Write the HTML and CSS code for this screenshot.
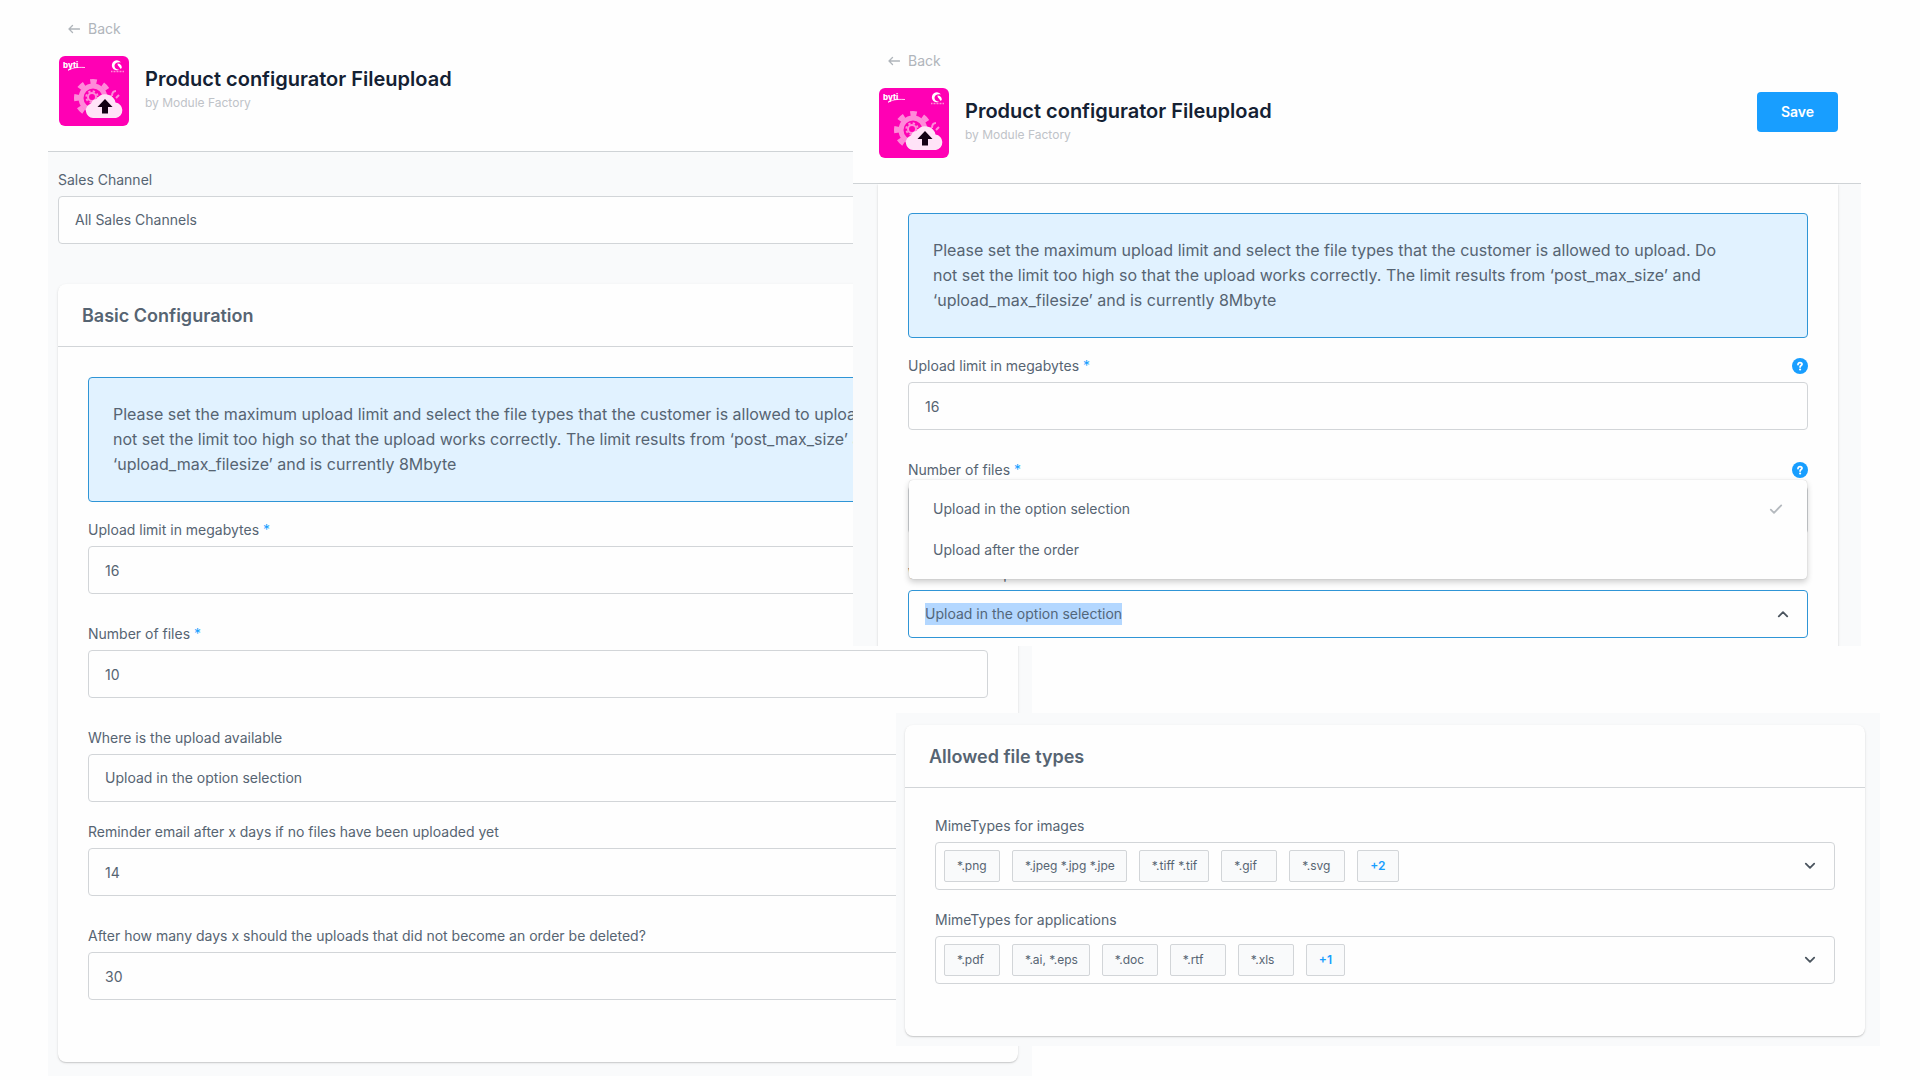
FILE: index.html
```html
<!DOCTYPE html>
<html lang="en">
<head>
<meta charset="utf-8">
<title>Product configurator Fileupload</title>
<link rel="stylesheet" href="styles.css">
</head>
<body>
<svg class="sprite" aria-hidden="true">
  <symbol id="arrow-left" viewBox="0 0 12 12"><path d="M11.500 6H1M4.500 2.500L1 6l3.500 3.500" fill="none" stroke="currentColor" stroke-width="1.300" stroke-linecap="round" stroke-linejoin="round"/></symbol>
  <symbol id="chevron-down" viewBox="0 0 10 10"><path d="M1.500 3L5 6.500L8.500 3" fill="none" stroke="currentColor" stroke-width="1.500" stroke-linecap="round" stroke-linejoin="round"/></symbol>
  <symbol id="chevron-up" viewBox="0 0 10 10"><path d="M1.500 7L5 3.500L8.500 7" fill="none" stroke="currentColor" stroke-width="1.500" stroke-linecap="round" stroke-linejoin="round"/></symbol>
  <symbol id="check" viewBox="0 0 14 14"><path d="M1.800 7.600L5 10.800L12.200 3.400" fill="none" stroke="currentColor" stroke-width="1.800" stroke-linecap="round" stroke-linejoin="round"/></symbol>
  <symbol id="help" viewBox="0 0 16 16"><circle cx="8" cy="8" r="8" fill="#189eff"/><path d="M6 6.500C6 5.300 6.900 4.600 8 4.600s2 .700 2 1.700c0 1.300-1.900 1.300-1.900 2.700" fill="none" stroke="#fff" stroke-width="1.800" stroke-linecap="round"/><circle cx="8.100" cy="11.500" r="1.100" fill="#fff"/></symbol>
  <symbol id="plugin" viewBox="0 0 70 70">
    <rect width="70" height="70" rx="6" fill="#ff00b4"/>
    <g fill="none" stroke="#ff8ad9">
      <circle cx="34" cy="42" r="12" stroke-width="5"/>
      <circle cx="34" cy="42" r="16.500" stroke-width="5" stroke-dasharray="6.480 6.480" stroke-dashoffset="3.240"/>
      <circle cx="33" cy="41" r="4" stroke-width="2"/>
      <circle cx="33" cy="41" r="5.700" stroke-width="2" stroke-dasharray="2.240 2.240"/>
      <path d="M53 40c0-3 1-5 4-5M57 42l3-3" stroke-width="2"/>
    </g>
    <path d="M34 62a7.500 7.500 0 0 1-2-14.600A6.500 6.500 0 0 1 37.500 43a10.500 10.500 0 0 1 19 3.600A7.800 7.800 0 0 1 57 62z" fill="#ffe3f7"/>
    <path d="M46 43l7.500 8H49v6.500h-6V51h-4.500z" fill="#140014"/>
    <path d="M62 6.500a5 5 0 1 0-2 7.300c-3-.300-4.500-2-4.500-4s2.500-4.200 6.500-3.300z" fill="#fff"/>
    <path d="M58.500 7.500c2.500 0 4.500 1.500 4.300 4.500-1 1-1.800.800-1.800.300-.200-2-2.500-1.800-2.500-4.800z" fill="#fff"/>
    <text x="4" y="12" class="mark-name" fill="#fff">byti</text>
    <path d="M9 14.500c4-2.500 8-3.500 17-3" fill="none" stroke="#fff" stroke-width=".800"/>
    <path d="M52 15.500h13" stroke="#ff8ad9" stroke-width="1.500" stroke-dasharray="1 .500"/>
  </symbol>
</svg>

<main class="board">
  <section class="panel panel-main">
    <header class="page-head">
      <a class="back" href="#"><svg class="icon-12"><use href="#arrow-left"/></svg>Back</a>
      <div class="identity">
        <svg class="plugin-logo"><use href="#plugin"/></svg>
        <div class="names">
          <h1>Product configurator Fileupload</h1>
          <p class="vendor">by Module Factory</p>
        </div>
      </div>
    </header>
    <div class="page-body">
      <div class="field channel">
        <label for="channel">Sales Channel</label>
        <select class="control" id="channel"><option>All Sales Channels</option></select>
      </div>
      <div class="card">
        <h2>Basic Configuration</h2>
        <div class="card-body">
          <p class="notice">Please set the maximum upload limit and select the file types that the customer is allowed to upload. Do not set the limit too high so that the upload works correctly. The limit results from ‘post_max_size’ and ‘upload_max_filesize’ and is currently 8Mbyte</p>
          <div class="field spaced">
            <label for="limit">Upload limit in megabytes <span class="required">*</span></label>
            <input class="control" id="limit" type="text" inputmode="numeric" value="16">
          </div>
          <div class="field spaced">
            <label for="files">Number of files <span class="required">*</span></label>
            <input class="control" id="files" type="text" inputmode="numeric" value="10">
          </div>
          <div class="field">
            <label for="where">Where is the upload available</label>
            <select class="control" id="where"><option>Upload in the option selection</option><option>Upload after the order</option></select>
          </div>
          <div class="field spaced">
            <label for="reminder">Reminder email after x days if no files have been uploaded yet</label>
            <input class="control" id="reminder" type="text" inputmode="numeric" value="14">
          </div>
          <div class="field spaced">
            <label for="cleanup">After how many days x should the uploads that did not become an order be deleted?</label>
            <input class="control" id="cleanup" type="text" inputmode="numeric" value="30">
          </div>
        </div>
      </div>
    </div>
  </section>

  <section class="panel panel-select">
    <header class="page-head">
      <a class="back" href="#"><svg class="icon-12"><use href="#arrow-left"/></svg>Back</a>
      <div class="identity">
        <svg class="plugin-logo"><use href="#plugin"/></svg>
        <div class="names">
          <h1>Product configurator Fileupload</h1>
          <p class="vendor">by Module Factory</p>
        </div>
        <button class="save" type="button">Save</button>
      </div>
    </header>
    <div class="page-body">
      <div class="card card-scrolled">
        <div class="card-body">
          <p class="notice">Please set the maximum upload limit and select the file types that the customer is allowed to upload. Do not set the limit too high so that the upload works correctly. The limit results from ‘post_max_size’ and ‘upload_max_filesize’ and is currently 8Mbyte</p>
          <div class="field spaced">
            <div class="label-row"><label for="limit-2">Upload limit in megabytes <span class="required">*</span></label><svg class="icon-16"><use href="#help"/></svg></div>
            <input class="control" id="limit-2" type="text" inputmode="numeric" value="16">
          </div>
          <div class="field spaced">
            <div class="label-row"><label for="files-2">Number of files <span class="required">*</span></label><svg class="icon-16"><use href="#help"/></svg></div>
            <input class="control" id="files-2" type="text" inputmode="numeric" value="">
          </div>
          <div class="field">
            <label for="where-2">Where is the upload available</label>
            <div class="combo combo-open">
              <input class="combo-input" id="where-2" type="text" role="combobox" aria-expanded="true" aria-controls="where-list" value="Upload in the option selection">
              <svg class="chevron"><use href="#chevron-up"/></svg>
              <ul class="menu" id="where-list" role="listbox">
                <li role="option" aria-selected="true">Upload in the option selection<svg class="icon-14"><use href="#check"/></svg></li>
                <li role="option" aria-selected="false">Upload after the order</li>
              </ul>
            </div>
          </div>
        </div>
      </div>
    </div>
  </section>

  <section class="panel panel-types">
    <div class="card">
      <h2>Allowed file types</h2>
      <div class="card-body">
        <div class="field" role="group" aria-labelledby="mime-images">
          <span class="label" id="mime-images">MimeTypes for images</span>
          <div class="combo">
            <ul class="chips">
              <li>*.png</li><li>*.jpeg *.jpg *.jpe</li><li>*.tiff *.tif</li><li>*.gif</li><li>*.svg</li>
            </ul>
            <button class="more" type="button">+2</button>
            <button class="toggle" type="button" aria-label="Show image types"><svg class="chevron"><use href="#chevron-down"/></svg></button>
          </div>
        </div>
        <div class="field" role="group" aria-labelledby="mime-apps">
          <span class="label" id="mime-apps">MimeTypes for applications</span>
          <div class="combo">
            <ul class="chips">
              <li>*.pdf</li><li>*.ai, *.eps</li><li>*.doc</li><li>*.rtf</li><li>*.xls</li>
            </ul>
            <button class="more" type="button">+1</button>
            <button class="toggle" type="button" aria-label="Show application types"><svg class="chevron"><use href="#chevron-down"/></svg></button>
          </div>
        </div>
      </div>
    </div>
  </section>
</main>
<script src="script.js"></script>
</body>
</html>
```
FILE: script.js
```js
// The open drop-down starts with its text selected, ready to be typed over.
const combo = document.getElementById("where-2");
combo.focus({ preventScroll: true });
combo.select();
```
FILE: styles.css
```css
* { box-sizing: border-box; }

body {
  margin: 0;
  background: #fefefe;
  color: #566472;
  font: 14px/16px Inter, "Liberation Sans", sans-serif;
}

h1, h2, p, ul { margin: 0; padding: 0; }
ul { list-style: none; }
input, select, button { font: inherit; color: inherit; }
.sprite { display: none; }

/* Three overlapping windows share one row; the columns set their edges. */
.board {
  display: grid;
  grid-template-columns: 48fr 805fr 43fr 136fr 829fr 19fr 40fr;
  align-items: start;
}
.panel { grid-row: 1; min-width: 0; background: #f9fafb; }
.panel-main { grid-column: 2 / 5; padding-bottom: 14px; }
.panel-select { grid-column: 3 / 6; margin-top: 32px; height: 614px; overflow: hidden; }
.panel-types { grid-column: 4 / 7; margin-top: 713px; padding: 12px 15px 10px 9px; }

.page-head {
  height: 152px;
  padding: 20px 0 0 10px;
  background: #fefefe;
  border-bottom: 1px solid #cfd3d6;
}
.panel-select .page-head { padding: 20px 23px 0 25px; }
.back {
  display: flex;
  align-items: center;
  gap: 8px;
  margin: 0 0 18px 10px;
  line-height: 18px;
  color: #b0b5bb;
  text-decoration: none;
}
.identity { display: flex; align-items: center; gap: 16px; }
.plugin-logo { width: 70px; height: 70px; margin-left: 1px; flex: none; }
.mark-name { font: 800 8px Inter, sans-serif; }
.names { flex: 1; margin-bottom: 4px; }
h1 { font-size: 20px; line-height: 28px; font-weight: 600; color: #142133; }
.vendor { font-size: 12px; line-height: 20px; color: #bfc3c8; }
.save {
  width: 81px;
  height: 40px;
  margin-bottom: 22px;
  border: 0;
  border-radius: 4px;
  background: #189eff;
  color: #fff;
  font-weight: 600;
}

.page-body { padding: 20px 14px 0 10px; }
.panel-select .page-body { padding: 0 23px 0 25px; }

.card {
  background: #fefefe;
  border-radius: 8px;
  box-shadow: 0 1px 1px rgba(0, 0, 0, .12), 0 1px 3px rgba(0, 0, 0, .1);
}
.card-scrolled { border-radius: 0; }
h2 {
  padding: 21px 24px 19px;
  border-bottom: 1px solid #d2d5d8;
  font-size: 18px;
  line-height: 22px;
  font-weight: 600;
}
.card-body { padding: 30px; }
.card-scrolled .card-body { padding-top: 29px; }

.notice {
  margin-bottom: 20px;
  padding: 24px 64px 24px 24px;
  border: 1px solid #2f95d6;
  border-radius: 4px;
  background: #e1f2ff;
  font-size: 16px;
  line-height: 25px;
}

.field { display: flex; flex-direction: column; gap: 8px; margin-bottom: 22px; }
.field.spaced { margin-bottom: 32px; }
.field.channel { margin-bottom: 40px; }
.field > *, .combo-input { min-width: 0; }
.label-row { display: flex; justify-content: space-between; }
.required { color: #189eff; }

.control, .combo {
  width: 100%;
  height: 48px;
  border: 1px solid #d2d5d8;
  border-radius: 4px;
  background: #fefefe;
}
.control { padding: 0 16px; appearance: none; }

.combo { position: relative; display: flex; align-items: center; padding: 0 8px; }
.combo-open { padding: 0 18px 0 16px; border-color: #2f95d6; }
.combo-input { flex: 1; height: 22px; padding: 0; border: 0; outline: 0; background: none; line-height: 22px; }
.combo-input::selection { background: #b3d7ff; color: #52667a; }
.chevron { display: block; width: 12px; height: 12px; color: #4a545e; }

.menu {
  position: absolute;
  inset: auto 0 calc(100% + 12px);
  padding: 8px 0 9px;
  border-radius: 4px;
  background: #fefefe;
  box-shadow: 0 0 1px rgba(0, 0, 0, .25), 0 3px 6px rgba(0, 0, 0, .2);
}
.menu li {
  display: flex;
  align-items: center;
  justify-content: space-between;
  height: 41px;
  padding: 0 24px;
}
.menu svg { color: #b4b9be; }

.chips { display: flex; gap: 12px; }
.chips li, .more {
  height: 32px;
  border: 1px solid #d2d5d8;
  border-radius: 2px;
  background: #f9fafb;
  font-size: 12px;
  line-height: 30px;
}
.chips li { min-width: 56px; padding: 0 11px 0 12px; }
.more { margin-left: 12px; padding: 0 12px; color: #189eff; font-weight: 600; }
.toggle { margin: 0 10px 0 auto; padding: 0; border: 0; background: none; }

.icon-12 { width: 12px; height: 12px; }
.icon-14 { width: 14px; height: 14px; }
.icon-16 { width: 16px; height: 16px; }
```
